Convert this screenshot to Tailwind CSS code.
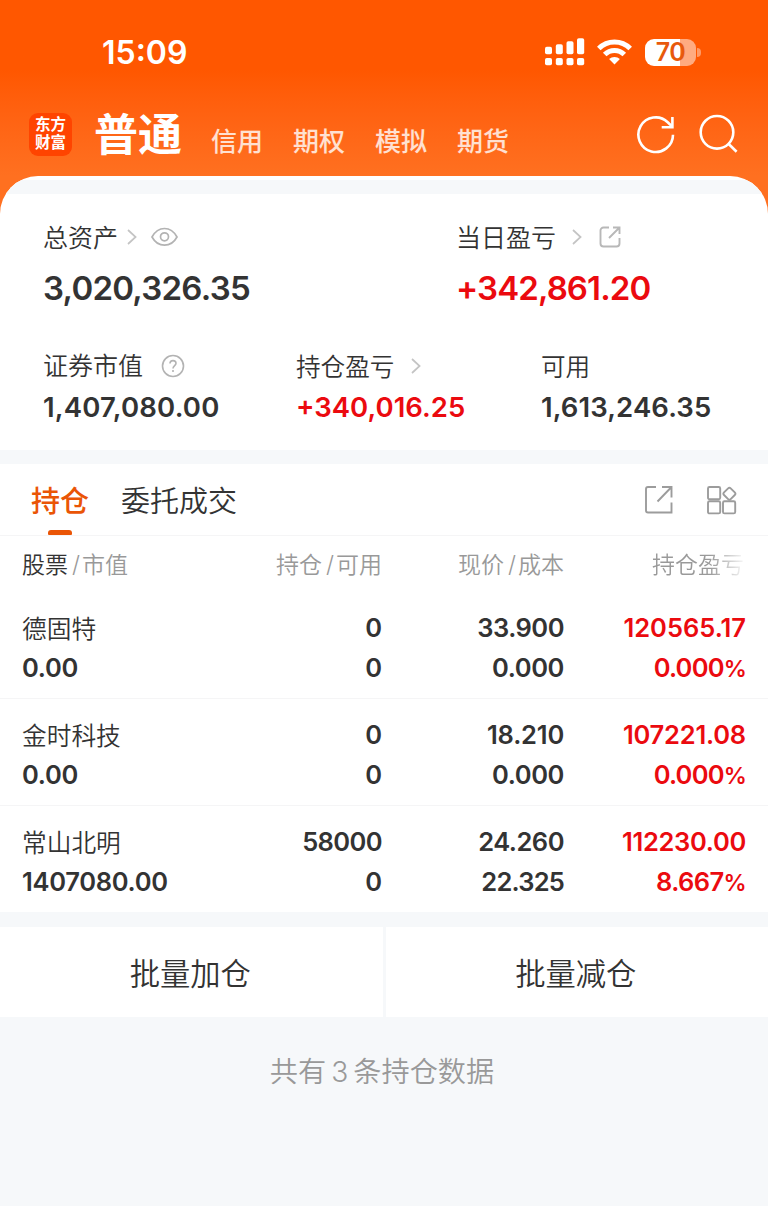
<!DOCTYPE html>
<html lang="zh-CN">
<head>
    <meta charset="UTF-8">
    <meta name="viewport" content="width=device-width, initial-scale=1.0">
    <title>持仓</title>
    <script src="https://cdn.jsdelivr.net/npm/@tailwindcss/browser@4"></script>
</head>
<body class="bg-white font-[Inter,'Noto_Sans_CJK_SC',sans-serif] font-[350] text-[#333333] whitespace-nowrap overflow-hidden">
    <!-- header -->
    <header class="h-[216px] bg-linear-to-b from-[#ff5700] from-[70px] to-[#ff7020] to-[176px]">
        <!-- status bar -->
        <div class="flex items-center justify-between h-[104px] pl-[102px] pr-[72px] text-white">
            <span class="pt-[2px] text-[32px] font-semibold">15:09</span>
            <div class="flex items-center">
                <svg class="w-10 h-7" viewBox="0 0 40 28" fill="#fff">
                    <rect x="0" y="8.7" width="7" height="7.5" rx="1.8"/>
                    <rect x="10.8" y="6.2" width="7" height="10" rx="1.8"/>
                    <rect x="21.5" y="3.2" width="7" height="13" rx="1.8"/>
                    <rect x="32" y="0.2" width="7.2" height="16" rx="1.8"/>
                    <rect x="0" y="20" width="7" height="7.2" rx="1.8"/>
                    <rect x="10.8" y="20" width="7" height="7.2" rx="1.8"/>
                    <rect x="21.5" y="20" width="7" height="7.2" rx="1.8"/>
                    <rect x="32" y="20" width="7.2" height="7.2" rx="1.8"/>
                </svg>
                <svg class="w-[35px] h-[26px] ml-[12px]" viewBox="0 0 35 26" fill="none" stroke="#fff" stroke-width="5">
                    <path d="M1.8 9.6a22.2 22.2 0 0 1 31.4 0"/>
                    <path d="M7.7 15.6a13.8 13.8 0 0 1 19.6 0"/>
                    <path d="M17.5 25.5l-5.4-5.4a7.7 7.7 0 0 1 10.8 0z" fill="#fff" stroke="none"/>
                </svg>
                <div class="relative flex items-center justify-center w-[51px] h-[27px] ml-[13px] rounded-[9px] bg-linear-to-r from-white from-[69%] to-[#ffab80] to-[69%] text-[#e8590c] text-[25px] leading-none font-semibold tracking-[-0.5px]">70
                    <span class="absolute -right-[5px] top-[9px] w-[4px] h-[9px] rounded-r-full bg-[#ff9a66]"></span>
                </div>
            </div>
        </div>
        <!-- account type nav -->
        <nav class="flex items-center h-[60px] pl-[29px] pr-[29px] text-white">
            <div class="flex items-center justify-center size-[43px] rounded-[9px] bg-[#ff4400] text-[15.5px] leading-[18px] font-bold">东方<br>财富</div>
            <a class="ml-[22px] pt-[2px] text-[44px] leading-[60px] font-bold">普通</a>
            <ul class="flex gap-[30px] ml-[29px] pt-[16px] text-[26px] text-white/80 leading-[46px] font-medium">
                <li>信用</li>
                <li>期权</li>
                <li>模拟</li>
                <li>期货</li>
            </ul>
            <div class="flex gap-[23px] ml-auto">
                <svg class="size-10" viewBox="0 0 40 40" fill="none" stroke="#fff" stroke-width="2.6">
                    <path d="M37 20.7A17.3 17.3 0 1 1 31.7 8.2l4.5 4.5"/>
                    <path d="M36.4 3v10.2H25.7"/>
                </svg>
                <svg class="size-10" viewBox="0 0 40 40" fill="none" stroke="#fff" stroke-width="2.6">
                    <circle cx="18" cy="18.3" r="16.3"/>
                    <path d="M29.2 29.5l8.4 8.2"/>
                </svg>
            </div>
        </nav>
    </header>

    <main class="-mt-10 rounded-t-[38px] bg-white pt-[4px] overflow-hidden">
        <div class="h-[14px] bg-[#f6f8fa]"></div>
        <!-- assets -->
        <section class="h-64 pt-[29px]">
            <div class="flex pl-[43px]">
                <div class="w-[413px]">
                    <div class="flex items-center h-7 text-[25px]"><span class="pt-[3px]">总资产</span>
                        <svg class="w-[10px] h-4 ml-[9px]" viewBox="0 0 10 16" fill="none" stroke="#c4c4c4" stroke-width="1.7"><path d="M1 1l7.6 7L1 15"/></svg>
                        <svg class="w-[27px] h-5 ml-[14px]" viewBox="0 0 27 20" fill="none" stroke="#b3b3b3" stroke-width="1.7">
                            <path d="M1 10C4 4.5 8.5 1.5 13.5 1.5S23 4.5 26 10c-3 5.5-7.5 8.2-12.5 8.2S4 15.5 1 10z"/>
                            <circle cx="13.5" cy="9.8" r="4"/>
                        </svg>
                    </div>
                    <div class="mt-[17px] h-10 leading-10 text-[33px] font-semibold tracking-[-0.75px]">3,020,326.35</div>
                </div>
                <div>
                    <div class="flex items-center h-7 text-[25px]"><span class="pt-[3px]">当日盈亏</span>
                        <svg class="w-[10px] h-4 ml-[16px]" viewBox="0 0 10 16" fill="none" stroke="#c4c4c4" stroke-width="1.7"><path d="M1 1l7.6 7L1 15"/></svg>
                        <svg class="w-[22px] h-[22px] ml-[17px]" viewBox="0 0 22 22" fill="none" stroke="#b8b8b8" stroke-width="1.9">
                            <path d="M10 1.5H4.5a3 3 0 0 0-3 3v13a3 3 0 0 0 3 3h13a3 3 0 0 0 3-3V12"/>
                            <path d="M14 1.5h6.5V8M20.5 1.5L10 12"/>
                        </svg>
                    </div>
                    <div class="mt-[17px] h-10 leading-10 text-[33px] font-semibold tracking-[-0.9px] text-[#eb0a0f]">+342,861.20</div>
                </div>
            </div>
            <div class="flex pl-[43px] mt-[44px]">
                <div class="w-[253px]">
                    <div class="flex items-center h-7 text-[25px]"><span class="pt-[2px]">证券市值</span>
                        <svg class="size-6 ml-[18px]" viewBox="0 0 24 24" fill="none" stroke="#b3b3b3" stroke-width="1.6">
                            <circle cx="12" cy="12" r="10.5"/>
                            <path d="M9 9.6c0-2 1.3-3 3-3s3 1.1 3 2.7c0 2.2-3 2.5-3 5.2M12 16v1.9"/>
                        </svg>
                    </div>
                    <div class="mt-[11px] h-8 leading-8 text-[27.5px] font-semibold tracking-[0.2px]">1,407,080.00</div>
                </div>
                <div class="w-[245px]">
                    <div class="flex items-center h-7 text-[24.6px]"><span class="pt-[2px]">持仓盈亏</span>
                        <svg class="w-[10px] h-4 ml-[17px]" viewBox="0 0 10 16" fill="none" stroke="#c4c4c4" stroke-width="1.7"><path d="M1 1l7.6 7L1 15"/></svg>
                    </div>
                    <div class="mt-[11px] h-8 leading-8 text-[27.5px] font-semibold text-[#eb0a0f]">+340,016.25</div>
                </div>
                <div>
                    <div class="flex items-center h-7 text-[24.6px]"><span class="pt-[2px]">可用</span></div>
                    <div class="mt-[11px] h-8 leading-8 text-[27.5px] font-semibold tracking-[0.1px]">1,613,246.35</div>
                </div>
            </div>
        </section>
        <div class="h-[14px] bg-[#f6f8fa]"></div>

        <!-- tabs -->
        <div class="flex h-[72px] pl-[31px] pr-[32px] border-b border-[#f5f5f6] text-[29px] leading-[76px]">
            <a class="relative font-medium text-[#ea5506]">持仓
                <span class="absolute left-[17px] top-[66px] w-6 h-[5px] rounded-t-[3px] rounded-b-[1px] bg-[#ea5506]"></span>
            </a>
            <a class="ml-[32px]">委托成交</a>
            <div class="flex items-center gap-[33px] ml-auto -mr-[1px]">
                <svg class="w-[30px] h-[30px]" viewBox="0 0 30 30" fill="none" stroke="#9c9c9c" stroke-width="1.9">
                    <path d="M12 2H4a2 2 0 0 0-2 2V25.5a2 2 0 0 0 2 2h23.5V17.5"/>
                    <path d="M18 2h9.5V12.5M27.5 2L13.5 16.5"/>
                </svg>
                <svg class="w-[30px] h-[30px]" viewBox="0 0 30 30" fill="none" stroke="#9c9c9c" stroke-width="1.9">
                    <rect x="1" y="2" width="12.2" height="12.2" rx="1.5"/>
                    <rect x="1" y="16.2" width="12.2" height="12.2" rx="1.5"/>
                    <rect x="16" y="16.2" width="12.2" height="12.2" rx="1.5"/>
                    <rect x="17.7" y="4" width="9.4" height="9.4" rx="1.8" transform="rotate(45 22.4 8.7)"/>
                </svg>
            </div>
        </div>

        <!-- positions -->
        <div class="grid grid-cols-[190px_170px_182px_182px] h-14 pl-[22px] pt-[9px] leading-10 text-[23px] text-[#999999] text-right">
            <div class="text-left"><span class="text-[#333333]">股票</span><span class="ml-1 mr-[2px]">/</span>市值</div>
            <div>持仓<span class="ml-1 mr-[2px]">/</span>可用</div>
            <div>现价<span class="ml-1 mr-[2px]">/</span>成本</div>
            <div class="pr-[2px] bg-linear-to-r from-[#999999] from-[80%] to-[#99999908] bg-clip-text text-transparent">持仓盈亏</div>
        </div>
        <div class="grid grid-cols-[190px_170px_182px_182px] content-start h-[107px] pl-[22px] pt-4 leading-10 text-[25.5px] font-semibold text-right border-b border-[#f5f5f6]">
            <div class="pt-[1px] -mb-[1px] text-left text-[24.7px] font-[350]">德固特</div>
            <div>0</div>
            <div class="tracking-[-0.5px]">33.900</div>
            <div class="text-[#eb0a0f]">120565.17</div>
            <div class="text-left tracking-[-0.3px]">0.00</div>
            <div>0</div>
            <div class="tracking-[-0.4px]">0.000</div>
            <div class="text-[#eb0a0f] tracking-[-0.8px]">0.000<span class="text-[23px]">%</span></div>
        </div>
        <div class="grid grid-cols-[190px_170px_182px_182px] content-start h-[107px] pl-[22px] pt-4 leading-10 text-[25.5px] font-semibold text-right border-b border-[#f5f5f6]">
            <div class="pt-[1px] -mb-[1px] text-left text-[24.7px] font-[350]">金时科技</div>
            <div>0</div>
            <div class="tracking-[-0.2px]">18.210</div>
            <div class="text-[#eb0a0f] tracking-[-0.2px]">107221.08</div>
            <div class="text-left tracking-[-0.3px]">0.00</div>
            <div>0</div>
            <div class="tracking-[-0.4px]">0.000</div>
            <div class="text-[#eb0a0f] tracking-[-0.8px]">0.000<span class="text-[23px]">%</span></div>
        </div>
        <div class="grid grid-cols-[190px_170px_182px_182px] content-start h-[106px] pl-[22px] pt-4 leading-10 text-[25.5px] font-semibold text-right">
            <div class="pt-[1px] -mb-[1px] text-left text-[24.7px] font-[350]">常山北明</div>
            <div class="tracking-[-0.6px]">58000</div>
            <div class="tracking-[-0.5px]">24.260</div>
            <div class="text-[#eb0a0f] tracking-[-0.3px]">112230.00</div>
            <div class="text-left tracking-[-0.3px]">1407080.00</div>
            <div>0</div>
            <div class="tracking-[-0.8px]">22.325</div>
            <div class="text-[#eb0a0f] tracking-[-0.6px]">8.667<span class="text-[23px]">%</span></div>
        </div>
    </main>

    <!-- batch actions -->
    <footer class="h-[294px] pt-[15px] bg-[#f6f8fa] text-center">
        <div class="grid grid-cols-2 gap-[3px] h-[90px] text-[30.3px]">
            <a class="flex items-center justify-center h-[90px] pt-[6px] pr-[2px] bg-white">批量加仓</a>
            <a class="flex items-center justify-center h-[90px] pt-[6px] pr-[2px] bg-white">批量减仓</a>
        </div>
        <p class="pt-[33px] pr-1 leading-[44px] text-[28.2px] text-[#999999]">共有<span class="mx-[5px]">3</span>条持仓数据</p>
    </footer>
</body>
</html>
